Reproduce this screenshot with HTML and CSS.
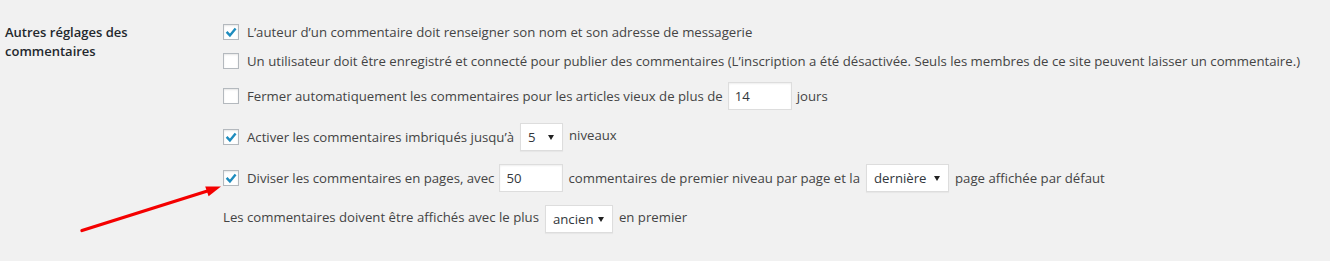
FILE: index.html
```html
<!DOCTYPE html>
<html lang="fr">
  <head>
    <meta charset="utf-8">
    <title>Réglages des commentaires</title>
    <link rel="stylesheet" href="styles.css">
  </head>
  <body>
    <div class="page">
      <div class="setting">
        <div class="setting-title"><span>Autres réglages des commentaires</span></div>

        <div class="setting-fields">
          <div class="field">
            <span class="check"><svg viewBox="1 1 14 14" width="14" height="14"><path d="M3.6 7.9 6.9 11.4 12.6 4.4"/></svg></span>
            <span>L’auteur d’un commentaire doit renseigner son nom et son adresse de messagerie</span>
          </div>

          <div class="field field-2">
            <span class="check"></span>
            <span>Un utilisateur doit être enregistré et connecté pour publier des commentaires (L’inscription a été désactivée. Seuls les membres de ce site peuvent laisser un commentaire.)</span>
          </div>

          <div class="field field-tall field-3">
            <span class="check"></span>
            <span>Fermer automatiquement les commentaires pour les articles vieux de plus de</span>
            <input class="num" type="text" value="14" readonly>
            <span>jours</span>
          </div>

          <div class="field field-tall">
            <span class="check"><svg viewBox="1 1 14 14" width="14" height="14"><path d="M3.6 7.9 6.9 11.4 12.6 4.4"/></svg></span>
            <span>Activer les commentaires imbriqués jusqu’à</span>
            <span class="select select-5"><span>5</span><svg viewBox="0 0 6 5" width="6" height="5"><polygon points="0,0 6,0 3,5"/></svg></span>
            <span class="raised">niveaux</span>
          </div>

          <div class="field field-tall">
            <span class="check"><svg viewBox="1 1 14 14" width="14" height="14"><path d="M3.6 7.9 6.9 11.4 12.6 4.4"/></svg></span>
            <span>Diviser les commentaires en pages, avec</span>
            <input class="num" type="text" value="50" readonly>
            <span>commentaires de premier niveau par page et la</span>
            <span class="select select-last"><span>dernière</span><svg viewBox="0 0 6 5" width="6" height="5"><polygon points="0,0 6,0 3,5"/></svg></span>
            <span>page affichée par défaut</span>
          </div>

          <div class="field field-tall">
            <span class="raised">Les commentaires doivent être affichés avec le plus</span>
            <span class="select select-old"><span>ancien</span><svg viewBox="0 0 6 5" width="6" height="5"><polygon points="0,0 6,0 3,5"/></svg></span>
            <span class="raised">en premier</span>
          </div>
        </div>
      </div>

      <!-- red pointer drawn over the screenshot -->
      <svg class="pointer" width="1330" height="261" viewBox="0 0 1330 261">
        <line x1="82" y1="230.5" x2="209" y2="190.5" stroke="#f40000" stroke-width="3.4" stroke-linecap="round"/>
        <polygon points="221,186.5 205.2,186.4 208.6,196.2" fill="#f40000"/>
      </svg>
    </div>
  </body>
</html>
```

FILE: styles.css
```css
* {
  box-sizing: border-box;
}

body {
  margin: 0;
  background: #f1f1f1;
  color: #444;
  font-family: "Open Sans", "Noto Sans", sans-serif;
  font-size: 13.2px;
}

.page {
  position: relative;
  height: 261px;
  padding-top: 22px;
}

/* one settings row: title on the left, fields on the right */
.setting {
  display: flex;
}

.setting-title {
  width: 223px;
  flex: none;
  padding: 1px 0 0 5px;
  color: #23282d;
  font-weight: 600;
  font-size: 13px;
  line-height: 19px;
}

.setting-title span {
  display: block;
  width: 150px;
}

.field {
  display: flex;
  align-items: center;
  height: 20px;
  white-space: nowrap;
}

.field-2 {
  margin-top: 9px;
}

.field-tall {
  height: 28px;
  margin-top: 13px;
}

.field-3 {
  margin-top: 11px;
}

.raised {
  position: relative;
  top: -2px;
}

/* checkbox */
.check {
  width: 16px;
  height: 16px;
  flex: none;
  margin-right: 8px;
  border: 1px solid #b4b9be;
  background: #fff;
  box-shadow: inset 0 1px 2px rgba(0, 0, 0, .1);
}

.check svg {
  display: block;
}

.check path {
  fill: none;
  stroke: #1e8cbe;
  stroke-width: 2.4;
}

/* text inputs */
.num {
  width: 64px;
  height: 28px;
  margin: 0 5px 0 5px;
  padding: 0 6px;
  border: 1px solid #ddd;
  background: #fff;
  box-shadow: inset 0 1px 2px rgba(0, 0, 0, .07);
  color: #32373c;
  font-family: inherit;
  font-size: 13.2px;
  outline: none;
}

/* dropdowns */
.select {
  display: flex;
  align-items: center;
  justify-content: space-between;
  height: 28px;
  margin: 0 6px 0 6px;
  padding: 0 8px 0 7px;
  border: 1px solid #ddd;
  background: #fff;
  box-shadow: 0 1px 1px rgba(0, 0, 0, .04);
  color: #32373c;
}

.select svg {
  fill: #222;
}

.select-5 {
  width: 43px;
}

.select-last {
  width: 83px;
}

.select-old {
  width: 68px;
}

.pointer {
  position: absolute;
  top: 0;
  left: 0;
  pointer-events: none;
}
```
